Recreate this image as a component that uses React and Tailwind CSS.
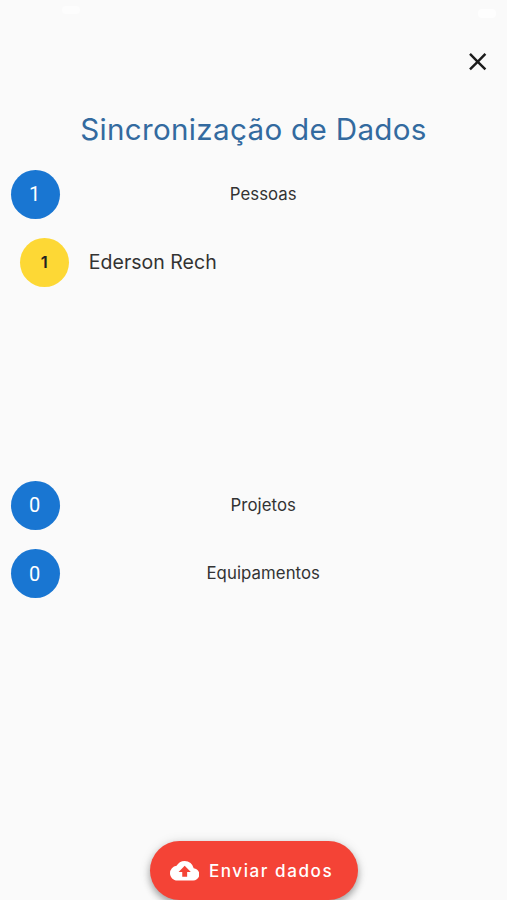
import { MdClose, MdCloudUpload } from 'react-icons/md'

const people = [{ id: 1, name: 'Ederson Rech' }]

function SectionRow({ count, label }) {
  return (
    <div className="flex items-center h-[49px] pl-[10.5px] pr-[60px]">
      <div className="flex items-center justify-center shrink-0 size-[49px] pr-px rounded-full bg-[#1976d2] text-white font-['Roboto',sans-serif] text-[20px]">
        {count}
      </div>
      <span className="flex-1 pl-5 pt-px text-center text-[16.8px] tracking-[0.06px] text-[#333333]">{label}</span>
    </div>
  )
}

export default function App() {
  return (
    <div className="flex flex-col h-[900px] overflow-hidden bg-[#fafafa] font-['Inter',sans-serif]">
      {/* status bar, white on near-white */}
      <div className="flex items-center justify-between h-6 pl-[62px] pr-[11px]">
        <span className="w-[18px] h-2 mb-1 rounded-full bg-[#fdfdfd]" />
        <span className="w-[18px] h-[9px] mt-[3px] rounded-sm bg-[#fefefe]" />
      </div>

      <header className="flex justify-end pt-[23px] pr-[15px]">
        <button aria-label="Fechar">
          <MdClose className="size-[29.4px] text-[#1c1c1c]" />
        </button>
      </header>

      <h1 className="mt-[32.8px] h-10 leading-10 text-center text-[29.6px] tracking-[0.32px] text-[#336a9f]">
        Sincronização de Dados
      </h1>

      <main className="mt-[20.4px] flex flex-col">
        <SectionRow count={1} label="Pessoas" />

        <ul className="mt-[19.5px] h-[242.5px]">
          {people.map(p => (
            <li key={p.id} className="flex items-center pl-[20.3px] gap-[19.5px]">
              <div className="flex items-center justify-center size-[49px] pr-px pb-px rounded-full bg-[#fdd835] text-[#212121] text-[16.5px] font-semibold">
                {p.id}
              </div>
              <span className="text-[19.5px] tracking-[0.02px] text-[#333333]">{p.name}</span>
            </li>
          ))}
        </ul>

        <div className="flex flex-col gap-[19.5px]">
          <SectionRow count={0} label="Projetos" />
          <SectionRow count={0} label="Equipamentos" />
        </div>
      </main>

      <footer className="mt-auto flex justify-center">
        <button className="flex items-center gap-[10px] w-[208px] h-[58.8px] pl-5 rounded-full bg-[#f44336] text-white shadow-[0_4px_7px_rgba(0,0,0,0.3),0_1px_12px_rgba(0,0,0,0.12)]">
          <MdCloudUpload className="size-[29.4px]" />
          <span className="text-[17.1px] font-medium tracking-[1.55px] whitespace-nowrap">Enviar dados</span>
        </button>
      </footer>
    </div>
  )
}
